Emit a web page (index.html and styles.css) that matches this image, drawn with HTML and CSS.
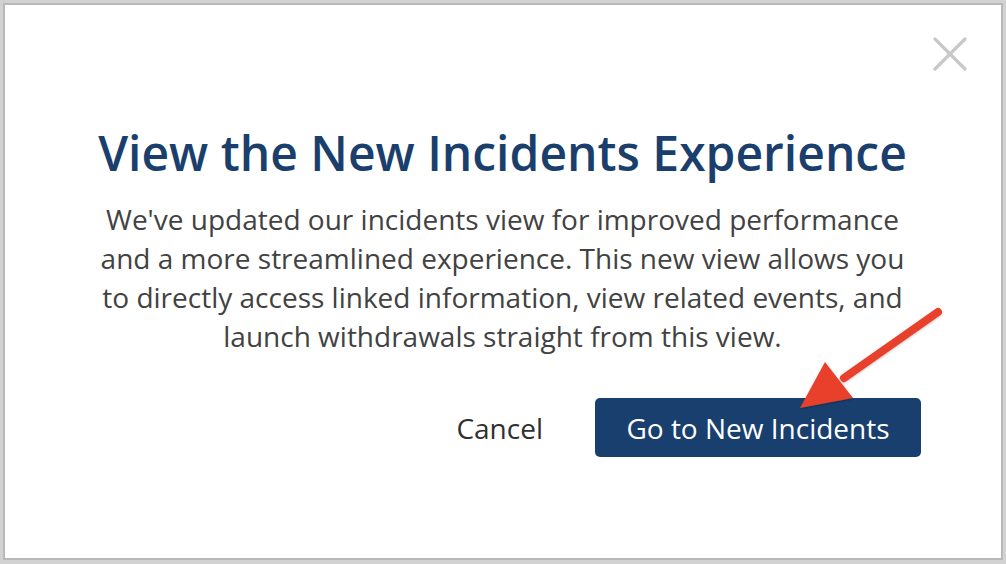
FILE: index.html
```html
<!DOCTYPE html>
<html lang="en">
<head>
<meta charset="utf-8">
<title>View the New Incidents Experience</title>
<link rel="stylesheet" href="styles.css">
</head>
<body>
<div class="dialog">
  <button class="close" aria-label="Close">
    <svg width="34" height="34" viewBox="0 0 34 34"><path d="M2 2 L32 32 M32 2 L2 32" stroke="#c8c8c8" stroke-width="3.2" stroke-linecap="round" fill="none"/></svg>
  </button>
  <h1 class="title">View the New Incidents Experience</h1>
  <p class="body">We've updated our incidents view for improved performance and a more streamlined experience. This new view allows you to directly access linked information, view related events, and launch withdrawals straight from this view.</p>
  <div class="actions">
    <button class="btn-cancel">Cancel</button>
    <button class="btn-primary">Go to New Incidents</button>
  </div>
  <svg class="arrow" width="160" height="120" viewBox="0 0 160 120">
    <defs>
      <filter id="sh" x="-20%" y="-20%" width="140%" height="140%">
        <feDropShadow dx="0" dy="1" stdDeviation="1" flood-color="#000" flood-opacity="0.25"/>
      </filter>
    </defs>
    <g filter="url(#sh)">
      <line x1="138" y1="12" x2="44" y2="78" stroke="#e8412a" stroke-width="8" stroke-linecap="round"/>
      <polygon points="0,108 25,62 53,98" fill="#e8412a"/>
    </g>
  </svg>
</div>
</body>
</html>
```
FILE: styles.css
```css
html, body {
  margin: 0;
  padding: 0;
}
body {
  width: 1006px;
  height: 564px;
  background: #d2d2d2;
  box-sizing: border-box;
  padding: 3px 3px 4px 3px;
  font-family: "Open Sans", "Liberation Sans", sans-serif;
}
.dialog {
  position: relative;
  box-sizing: border-box;
  width: 1000px;
  height: 557px;
  background: #fff;
  border: 2px solid #b9b9b9;
  display: flex;
  flex-direction: column;
  align-items: center;
  padding: 118px 80px 0 79px;
}
.close {
  position: absolute;
  top: 32px;
  right: 34px;
  padding: 0;
  border: 0;
  background: none;
  width: 34px;
  height: 34px;
}
.title {
  margin: 0;
  font-size: 48px;
  font-weight: 600;
  line-height: 60px;
  color: #1a3f6c;
  text-align: center;
  white-space: nowrap;
}
.body {
  margin: 17px 0 0 0;
  font-size: 28px;
  line-height: 39px;
  color: #424242;
  text-align: center;
  max-width: 812px;
}
.actions {
  align-self: stretch;
  display: flex;
  justify-content: flex-end;
  align-items: center;
  gap: 52px;
  margin-top: 42px;
}
.btn-cancel {
  border: 0;
  background: none;
  padding: 0;
  font-family: inherit;
  font-size: 28px;
  color: #2f2f2f;
}
.btn-primary {
  border: 0;
  background: #183f6e;
  color: #fff;
  font-family: inherit;
  font-size: 28px;
  height: 59px;
  width: 326px;
  border-radius: 5px;
  padding: 0;
}
.arrow {
  position: absolute;
  left: 795px;
  top: 295px;
}
```
